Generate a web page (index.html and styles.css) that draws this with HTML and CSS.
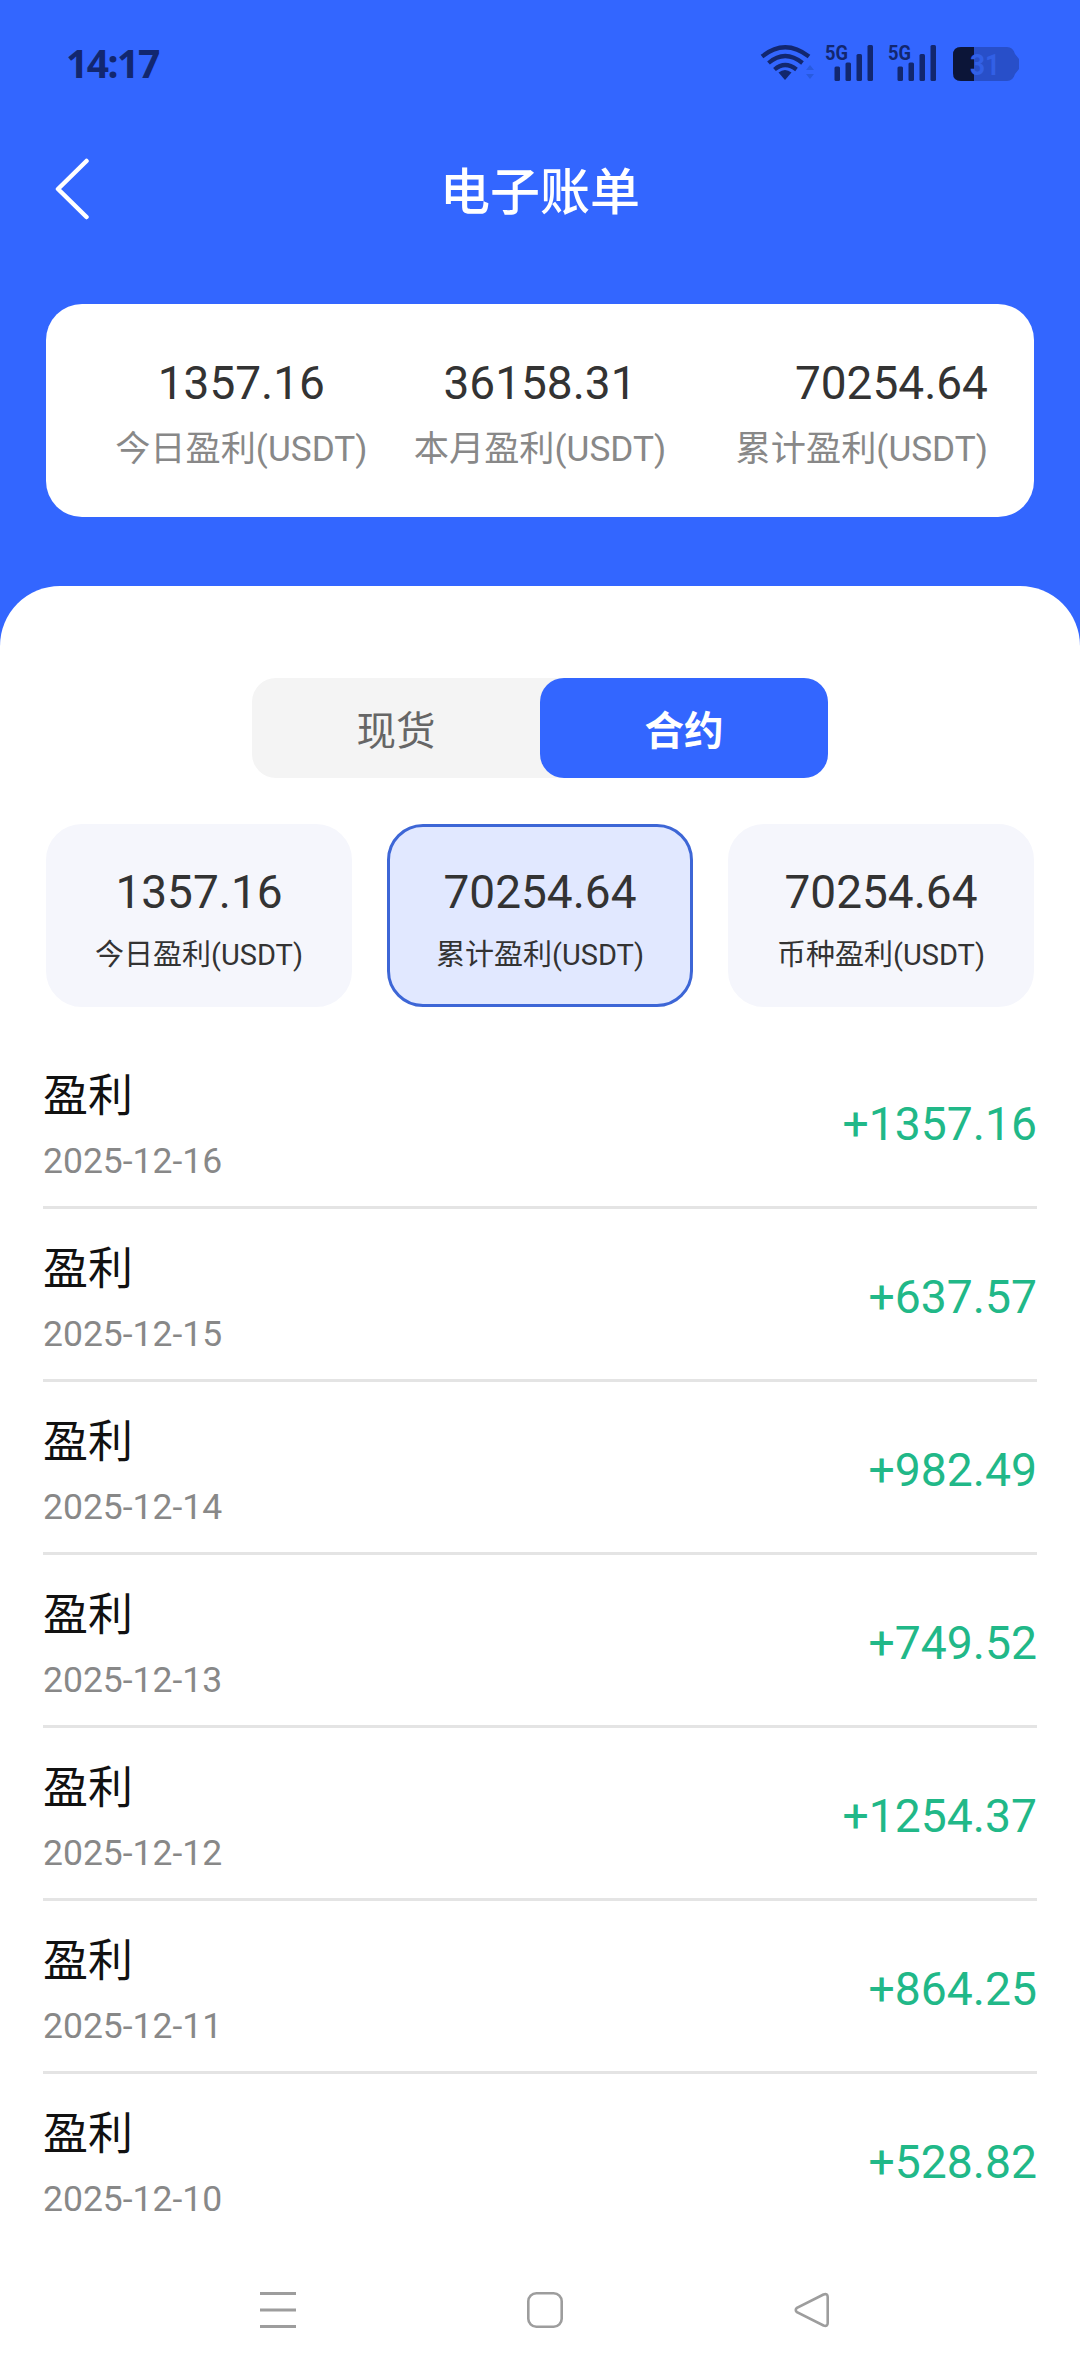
FILE: index.html
```html
<!DOCTYPE html>
<html lang="zh-CN">
<head>
  <meta charset="UTF-8" />
  <meta name="viewport" content="width=device-width, initial-scale=1.0"/>
  <title>电子账单</title>
  <link rel="stylesheet" href="styles.css">
</head>
<body>
  <div class="status-bar">
    <span class="time">14:17</span>
    <svg class="status-icons" width="264" height="44" viewBox="0 0 264 44">
      <!-- wifi -->
      <g fill="none" stroke="#12276f" stroke-width="4.2">
        <path d="M2 15.500Q25 -3 49 15.500"/>
        <path d="M8.500 22Q25 8 42.500 22"/>
        <path d="M14.500 28.500Q25 19.500 36.500 28.500"/>
      </g>
      <path d="M18.500 31.500Q25 26.500 31.500 31.500L25 39Z" fill="#12276f"/>
      <path d="M46 29l4-5 4 5zM46 33l4 5 4-5z" fill="#285adf"/>
      <!-- signal 1 -->
      <text class="net" x="65" y="18.500" textLength="23" lengthAdjust="spacingAndGlyphs">5G</text>
      <g fill="#12276f">
        <rect x="74.500" y="25.500" width="5.500" height="14.500" rx="1.500"/>
        <rect x="85.500" y="21.500" width="5.500" height="18.500" rx="1.500"/>
        <rect x="96.500" y="13" width="5.500" height="27" rx="1.500"/>
        <rect x="107.500" y="4" width="5.500" height="36" rx="1.500"/>
      </g>
      <!-- signal 2 -->
      <text class="net" x="128" y="18.500" textLength="23" lengthAdjust="spacingAndGlyphs">5G</text>
      <g fill="#12276f">
        <rect x="137.500" y="25.500" width="5.500" height="14.500" rx="1.500"/>
        <rect x="148.500" y="21.500" width="5.500" height="18.500" rx="1.500"/>
        <rect x="159.500" y="13" width="5.500" height="27" rx="1.500"/>
        <rect x="170.500" y="4" width="5.500" height="36" rx="1.500"/>
      </g>
      <!-- battery -->
      <path d="M201 6H247Q253 6 255 13L259 18V28L255 33Q253 40 247 40H201Q193 40 193 32V14Q193 6 201 6Z" fill="#284fc9"/>
      <path d="M214 6H201Q193 6 193 14V32Q193 40 201 40H214Z" fill="#0c1538"/>
      <text class="percent" x="210" y="33.500" textLength="30" lengthAdjust="spacingAndGlyphs">31</text>
    </svg>
  </div>

  <div class="navbar">
    <svg class="back" width="36" height="62" viewBox="0 0 36 62">
      <path d="M32.500 3L4 31L32.500 59" fill="none" stroke="#fff" stroke-width="4.500" stroke-linecap="round" stroke-linejoin="round"/>
    </svg>
    <h1>电子账单</h1>
  </div>

  <div class="summary">
    <div class="summary-item">
      <div class="num">1357.16</div>
      <div class="label">今日盈利(USDT)</div>
    </div>
    <div class="summary-item">
      <div class="num">36158.31</div>
      <div class="label">本月盈利(USDT)</div>
    </div>
    <div class="summary-item right">
      <div class="num">70254.64</div>
      <div class="label">累计盈利(USDT)</div>
    </div>
  </div>

  <div class="content">
    <div class="tabs">
      <div class="tab">现货</div>
      <div class="tab active">合约</div>
    </div>

    <div class="cards">
      <div class="card">
        <div class="num">1357.16</div>
        <div class="label">今日盈利(USDT)</div>
      </div>
      <div class="card active">
        <div class="num">70254.64</div>
        <div class="label">累计盈利(USDT)</div>
      </div>
      <div class="card">
        <div class="num">70254.64</div>
        <div class="label">币种盈利(USDT)</div>
      </div>
    </div>

    <div class="list">
      <div class="row">
        <div class="info">
          <div class="name">盈利</div>
          <div class="date">2025-12-16</div>
        </div>
        <div class="amount">+1357.16</div>
      </div>
      <div class="row">
        <div class="info">
          <div class="name">盈利</div>
          <div class="date">2025-12-15</div>
        </div>
        <div class="amount">+637.57</div>
      </div>
      <div class="row">
        <div class="info">
          <div class="name">盈利</div>
          <div class="date">2025-12-14</div>
        </div>
        <div class="amount">+982.49</div>
      </div>
      <div class="row">
        <div class="info">
          <div class="name">盈利</div>
          <div class="date">2025-12-13</div>
        </div>
        <div class="amount">+749.52</div>
      </div>
      <div class="row">
        <div class="info">
          <div class="name">盈利</div>
          <div class="date">2025-12-12</div>
        </div>
        <div class="amount">+1254.37</div>
      </div>
      <div class="row">
        <div class="info">
          <div class="name">盈利</div>
          <div class="date">2025-12-11</div>
        </div>
        <div class="amount">+864.25</div>
      </div>
      <div class="row">
        <div class="info">
          <div class="name">盈利</div>
          <div class="date">2025-12-10</div>
        </div>
        <div class="amount">+528.82</div>
      </div>
    </div>
  </div>

  <div class="system-nav">
    <svg width="36" height="36" viewBox="0 0 36 36">
      <path d="M0 1.500H36M0 18H36M0 34.500H36" stroke="#9d9d9d" stroke-width="3"/>
    </svg>
    <svg width="36" height="36" viewBox="0 0 36 36">
      <rect x="1.300" y="1.300" width="33.400" height="33.400" rx="8" fill="none" stroke="#9d9d9d" stroke-width="2.600"/>
    </svg>
    <svg width="36" height="36" viewBox="0 0 36 36">
      <path d="M29.500 2.500L3 15.800Q0.500 18 3 20.200L29.500 33.500Q33.700 35 33.700 31V5Q33.700 1 29.500 2.500Z" fill="none" stroke="#9d9d9d" stroke-width="2.600"/>
    </svg>
  </div>
</body>
</html>
```
FILE: styles.css
```css
* {
  box-sizing: border-box;
}
body {
  margin: 0;
  width: 1080px;
  height: 2376px;
  overflow: hidden;
  display: flex;
  flex-direction: column;
  background-color: #3366ff;
  font-family: Roboto, "Noto Sans CJK SC", sans-serif;
}
svg {
  display: block;
  flex: none;
}

/* status bar */
.status-bar {
  height: 126px;
  flex: none;
  padding: 41px 56px 0 66px;
  display: flex;
  justify-content: space-between;
  align-items: flex-start;
}
.time {
  font-family: "Noto Sans", sans-serif;
  font-size: 39px;
  font-weight: 700;
  line-height: 43px;
  letter-spacing: -1.500px;
  color: #12276f;
}
.net {
  font-family: Roboto, sans-serif;
  font-size: 21px;
  font-weight: 700;
  fill: #12276f;
}
.percent {
  font-family: Roboto, sans-serif;
  font-size: 30px;
  font-weight: 700;
  fill: #3260e6;
}

/* title */
.navbar {
  height: 178px;
  flex: none;
  padding: 0 54px;
  display: grid;
  grid-template-columns: 36px 1fr 36px;
}
.back {
  margin-top: 32px;
}
h1 {
  margin: 31px 0 0;
  text-align: center;
  font-size: 50px;
  font-weight: 500;
  line-height: 72px;
  color: #fff;
}

/* summary card */
.summary {
  margin: 0 46px;
  padding: 49px 46px 0;
  height: 213px;
  flex: none;
  display: grid;
  grid-template-columns: repeat(3, 1fr);
  background-color: #fff;
  border-radius: 36px;
  text-align: center;
  white-space: nowrap;
}
.summary .right {
  text-align: right;
}
.num {
  font-size: 46px;
  line-height: 60px;
  color: #333;
}
.label {
  color: #333;
}
.summary .label {
  margin-top: 11px;
  font-size: 35.200px;
  line-height: 50px;
  color: #888;
}

/* white sheet */
.content {
  margin-top: 69px;
  padding: 92px 43px 0;
  flex: 1;
  background-color: #fff;
  border-radius: 60px 60px 0 0;
}
.tabs {
  width: 576px;
  height: 100px;
  margin: 0 auto;
  display: flex;
  background-color: #f4f4f4;
  border-radius: 24px;
}
.tab {
  flex: 1;
  text-align: center;
  font-size: 39.500px;
  line-height: 107px;
  color: #666;
}
.tab.active {
  background-color: #3366ff;
  border-radius: 24px;
  font-weight: 700;
  color: #fff;
}
.cards {
  margin: 46px 3px 0;
  display: grid;
  grid-template-columns: repeat(3, 1fr);
  gap: 35px;
}
.card {
  height: 183px;
  padding-top: 35px;
  border: 3px solid #f5f6fc;
  border-radius: 36px;
  background-color: #f5f6fc;
  text-align: center;
}
.card.active {
  border-color: #3d66d6;
  background-color: #e1e8ff;
}
.card .label {
  margin-top: 12px;
  font-size: 29px;
  line-height: 42px;
}

/* list */
.list {
  margin-top: 29px;
}
.row {
  height: 173px;
  padding-top: 6px;
  display: flex;
  justify-content: space-between;
  align-items: center;
  border-bottom: 3px solid #e4e4e4;
}
.row:last-child {
  height: 170px;
  border-bottom: none;
}
.info {
  padding-top: 5px;
}
.name {
  font-size: 45px;
  line-height: 60px;
  color: #111;
}
.date {
  margin-top: 9px;
  font-size: 35.500px;
  line-height: 50px;
  color: #888;
}
.amount {
  font-size: 46.300px;
  line-height: 60px;
  color: #21b888;
}

/* system buttons */
.system-nav {
  height: 132px;
  flex: none;
  padding: 48px 250px 0 260px;
  display: flex;
  justify-content: space-between;
  background-color: #fff;
}
```
